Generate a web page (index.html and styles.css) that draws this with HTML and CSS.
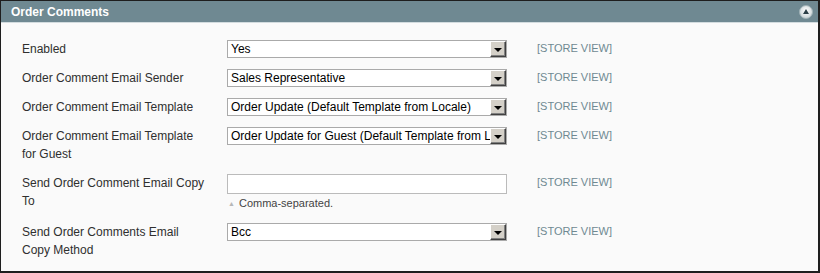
FILE: index.html
```html
<!DOCTYPE html>
<html lang="en">
<head>
    <meta charset="UTF-8">
    <title>Order Comments</title>
    <link rel="stylesheet" href="styles.css">
</head>
<body>

    <div class="section">
        <div class="section-head">
            <span class="section-title">Order Comments</span>
            <span class="collapse-btn">
                <svg width="14" height="14" viewBox="0 0 14 14">
                    <defs>
                        <radialGradient id="g" cx="50%" cy="40%" r="60%">
                            <stop offset="0" stop-color="#ffffff"/>
                            <stop offset="1" stop-color="#c9d3d6"/>
                        </radialGradient>
                    </defs>
                    <circle cx="7" cy="7" r="6.5" fill="url(#g)" stroke="#9fb1b6" stroke-width="1"/>
                    <path d="M7 4 L10 9 L4 9 Z" fill="#2b3f47"/>
                </svg>
            </span>
        </div>

        <div class="section-body">
            <div class="row">
                <div class="label">Enabled</div>
                <div class="control">
                    <div class="select"><span class="value">Yes</span><span class="arrow"></span></div>
                </div>
                <div class="scope">[STORE VIEW]</div>
            </div>

            <div class="row">
                <div class="label">Order Comment Email Sender</div>
                <div class="control">
                    <div class="select"><span class="value">Sales Representative</span><span class="arrow"></span></div>
                </div>
                <div class="scope">[STORE VIEW]</div>
            </div>

            <div class="row">
                <div class="label">Order Comment Email Template</div>
                <div class="control">
                    <div class="select"><span class="value">Order Update (Default Template from Locale)</span><span class="arrow"></span></div>
                </div>
                <div class="scope">[STORE VIEW]</div>
            </div>

            <div class="row">
                <div class="label">Order Comment Email Template for Guest</div>
                <div class="control">
                    <div class="select"><span class="value">Order Update for Guest (Default Template from Locale)</span><span class="arrow"></span></div>
                </div>
                <div class="scope">[STORE VIEW]</div>
            </div>

            <div class="row">
                <div class="label">Send Order Comment Email Copy To</div>
                <div class="control">
                    <div class="text-input"></div>
                    <p class="note"><span class="note-arrow">&#9650;</span>Comma-separated.</p>
                </div>
                <div class="scope">[STORE VIEW]</div>
            </div>

            <div class="row">
                <div class="label">Send Order Comments Email Copy Method</div>
                <div class="control">
                    <div class="select"><span class="value">Bcc</span><span class="arrow"></span></div>
                </div>
                <div class="scope">[STORE VIEW]</div>
            </div>
        </div>
    </div>

</body>
</html>
```

FILE: styles.css
```css
* {
    margin: 0;
    padding: 0;
    box-sizing: border-box;
}

body {
    font-family: "Liberation Sans", Arial, sans-serif;
    font-size: 12px;
    color: #2f2f2f;
    background-color: #fff;
}

.section {
    width: 820px;
    height: 273px;
    border: 1px solid #1e1e1e;
    border-right-width: 2px;
    border-bottom-width: 2px;
    background-color: #fafafa;
}

.section-head {
    height: 22px;
    background-color: #6f8992;
    border-bottom: 1px solid #d3dcdf;
    display: flex;
    align-items: center;
    justify-content: space-between;
    padding: 0 5px 0 10px;
}

    .section-title {
        color: #fff;
        font-weight: bold;
        font-size: 12px;
    }

    .collapse-btn {
        display: flex;
        width: 14px;
        height: 14px;
    }

.section-body {
    padding: 11px 0 0 21px;
}

.row {
    display: grid;
    grid-template-columns: 205px 280px auto;
    padding: 6px 0 5px;
    line-height: 18px;
}

    .row .label {
        width: 184px;
    }

.select {
    display: flex;
    height: 18px;
    border: 1px solid #aaa;
    background-color: #fff;
    line-height: 16px;
    color: #000;
}

    .select .value {
        flex: 1;
        padding-left: 3px;
        white-space: nowrap;
        overflow: hidden;
    }

    .select .arrow {
        width: 16px;
        height: 16px;
        background-color: #d4d0c8;
        border-top: 1px solid #fff;
        border-left: 1px solid #fff;
        border-right: 1px solid #404040;
        border-bottom: 1px solid #404040;
        box-shadow: inset -1px -1px 0 #808080;
        display: flex;
        align-items: center;
        justify-content: center;
    }

        .select .arrow::after {
            content: "";
            border-left: 4px solid transparent;
            border-right: 4px solid transparent;
            border-top: 4px solid #000;
            margin: 1px 1px 0 0;
        }

.text-input {
    height: 20px;
    border: 1px solid #bbb;
    background-color: #fff;
}

.note {
    font-size: 11px;
    line-height: 16px;
    color: #444;
    padding: 1px 0 0 1px;
}

    .note-arrow {
        font-size: 7px;
        color: #b7b7b7;
        margin-right: 4px;
        vertical-align: 1px;
    }

.scope {
    padding-left: 30px;
    font-size: 11px;
    color: #6f8992;
    line-height: 17px;
}
```
